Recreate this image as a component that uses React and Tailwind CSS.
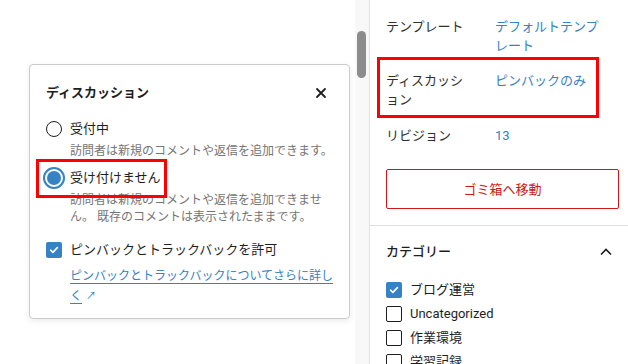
import React from 'react';

const blue = 'text-[#3582c4]';

const Check = () => (
  <svg width="12" height="12" viewBox="0 0 12 12" fill="none">
    <path d="M2.6 6.2l2.3 2.2 4.5-4.8" stroke="white" strokeWidth="1.6" strokeLinecap="round" strokeLinejoin="round" />
  </svg>
);

const Box = ({ checked }) =>
  checked ? (
    <span className="w-4 h-4 rounded-[2px] bg-[#3582c4] flex items-center justify-center shrink-0">
      <Check />
    </span>
  ) : (
    <span className="w-4 h-4 rounded-[2px] border border-[#1e1e1e] bg-white shrink-0" />
  );

const Row = ({ label, value, className = '', children }) => (
  <div className={`relative flex ${className}`}>
    <div className="w-[86px] mr-[23px] text-[#2f2f2f]">{label}</div>
    <div className={`w-[110px] ${blue}`}>{value}</div>
    {children}
  </div>
);

const DiscussionPopover = () => (
  <div className="w-[321px] border border-[#cccccc] rounded-[4px] bg-white shadow-[0_2px_6px_rgba(0,0,0,0.08)] pl-4 pr-4 pt-[18px] pb-[12px]">
    <div className="flex items-center justify-between h-[20px]">
      <span className="text-[13px] font-semibold text-[#1e1e1e]">ディスカッション</span>
      <svg width="12" height="12" viewBox="0 0 12 12" className="mr-[6px]">
        <path d="M2 2l8 8M10 2l-8 8" stroke="#1e1e1e" strokeWidth="1.8" strokeLinecap="round" />
      </svg>
    </div>

    <div className="mt-[16px] flex items-center h-[20px] gap-2">
      <span className="w-4 h-4 rounded-full border border-[#1e1e1e] bg-white shrink-0" />
      <span className="text-[13px] text-[#1e1e1e]">受付中</span>
    </div>
    <p className="mt-[4px] ml-6 w-[268px] text-[12px] leading-[17px] text-[#757575]">
      訪問者は新規のコメントや返信を追加できます。
    </p>

    <div className="relative mt-[8px] flex items-center h-[20px] gap-2">
      <span className="relative w-4 h-4 shrink-0">
        <svg width="22" height="22" viewBox="0 0 22 22" className="absolute -left-[3px] -top-[3px]">
          <circle cx="11" cy="11" r="10" fill="none" stroke="#3582c4" strokeWidth="2" />
          <circle cx="11" cy="11" r="7" fill="#3582c4" />
        </svg>
      </span>
      <span className="text-[13px] text-[#1e1e1e]">受け付けません</span>
      <div className="absolute -left-[10px] -top-[9px] w-[131px] h-[39px] border-[3px] border-[#ff0000]" />
    </div>
    <p className="mt-[4px] ml-6 w-[268px] text-[12px] leading-[17px] text-[#757575]">
      訪問者は新規のコメントや返信を追加できません。 既存のコメントは表示されたままです。
    </p>

    <div className="mt-[14px] flex items-center h-[20px] gap-2">
      <Box checked />
      <span className="text-[13px] text-[#1e1e1e]">ピンバックとトラックバックを許可</span>
    </div>
    <p className="mt-[6px] ml-6 w-[268px] text-[12px] leading-[20px]">
      <span className={`${blue} underline underline-offset-[3px]`}>ピンバックとトラックバックについてさらに詳しく</span>
      <span className={`${blue} text-[10px] ml-[4px] align-[1px]`}>↗</span>
    </p>
  </div>
);

const Category = ({ label, checked }) => (
  <div className="flex items-center h-4 gap-2">
    <Box checked={checked} />
    <span className="text-[13px] text-[#1e1e1e]">{label}</span>
  </div>
);

export default function App() {
  return (
    <div
      className="w-[628px] h-[364px] overflow-hidden flex bg-white"
      style={{ fontFamily: 'Roboto, "Noto Sans CJK JP", sans-serif' }}
    >
      <div className="w-[355px] shrink-0 pl-[29px] pt-[64px]">
        <DiscussionPopover />
      </div>

      <div className="w-[14px] shrink-0 bg-[#f8f8f8] pt-[31px] pl-[2px]">
        <div className="w-[9px] h-[47px] rounded-full bg-[#8c8c8c]" />
      </div>

      <div className="flex-1 border-l border-[#e0e0e0] text-[13px]">
        <div className="pl-4 pr-[9px] pt-[17px] leading-[19px]">
          <Row label="テンプレート" value="デフォルトテンプレート" />
          <Row label="ディスカッション" value="ピンバックのみ" className="mt-[16px]">
            <div className="absolute -left-[9px] -top-[14px] w-[222px] h-[61px] border-[3px] border-[#ff0000]" />
          </Row>
          <Row label="リビジョン" value="13" className="mt-[17px]" />

          <button className="mt-[24px] w-[233px] h-[40px] border border-[#cc1818] rounded-[2px] text-[13px] text-[#cc1818] flex items-center justify-center">
            ゴミ箱へ移動
          </button>
        </div>

        <div className="mt-[16px] border-t border-[#e0e0e0] pl-4 pr-[16px] pt-[16px]">
          <div className="flex items-center justify-between h-[20px]">
            <span className="text-[13px] font-medium text-[#1e1e1e]">カテゴリー</span>
            <svg width="12" height="8" viewBox="0 0 12 8">
              <path d="M1 6.5l5-5 5 5" fill="none" stroke="#1e1e1e" strokeWidth="1.6" />
            </svg>
          </div>
          <div className="mt-[20px] flex flex-col gap-2">
            <Category label="ブログ運営" checked />
            <Category label="Uncategorized" />
            <Category label="作業環境" />
            <Category label="学習記録" />
          </div>
        </div>
      </div>
    </div>
  );
}
